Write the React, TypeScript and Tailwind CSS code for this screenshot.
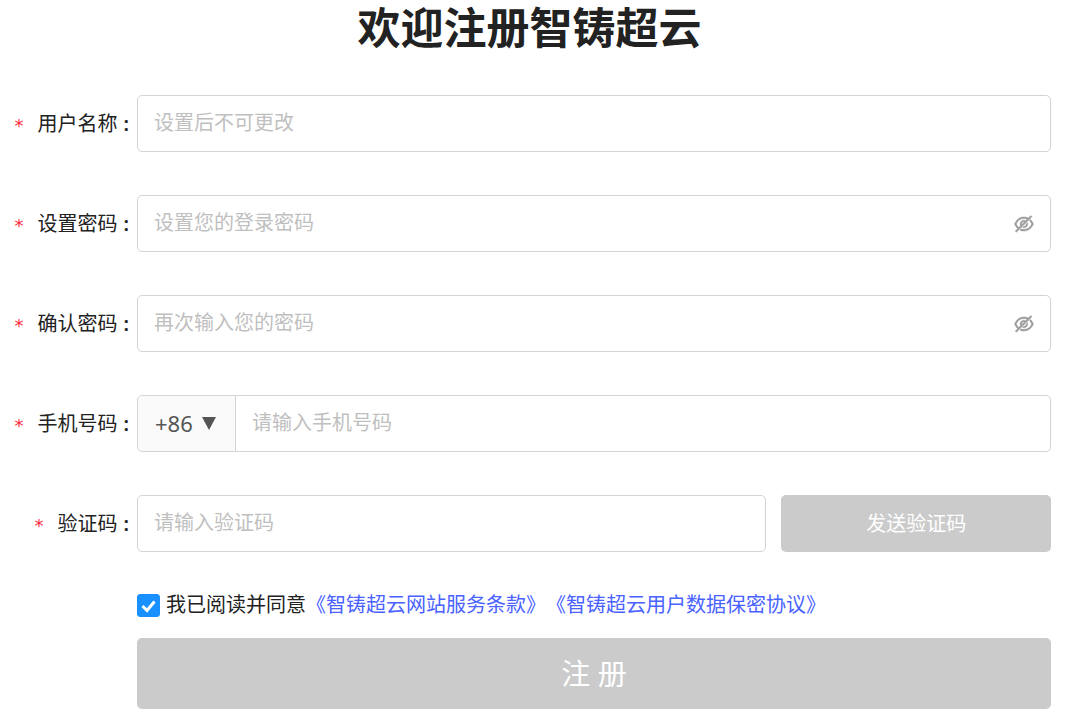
import React, { useState } from "react";
import { AiOutlineEyeInvisible } from "react-icons/ai";

const inputClass =
  "h-[57px] w-full min-w-0 rounded-[5px] border border-[#d4d4d4] bg-white px-4 pb-0.5 text-[20px] text-[#222] outline-none placeholder:text-[#bfbfbf] focus:border-[#1890ff]";

interface FormRowProps {
  id: string;
  label: string;
  children: React.ReactNode;
}

function FormRow({ id, label, children }: FormRowProps) {
  return (
    <div className="flex items-center">
      <label
        htmlFor={id}
        className="flex w-[137px] shrink-0 items-center justify-end pr-2 text-[20px] text-[#222]"
      >
        <span className="mr-3.5 pt-1 font-['DejaVu_Sans'] text-[18px] text-[#ff2d3f]">*</span>
        <span>{label}</span>
        <span className="ml-1.5 font-semibold">:</span>
      </label>
      <div className="min-w-0 flex-1">{children}</div>
    </div>
  );
}

interface PasswordInputProps {
  id: string;
  placeholder: string;
}

function PasswordInput({ id, placeholder }: PasswordInputProps) {
  const [visible, setVisible] = useState(false);

  return (
    <div className="relative">
      <input
        id={id}
        type={visible ? "text" : "password"}
        placeholder={placeholder}
        className={`${inputClass} pr-12`}
      />
      <button
        type="button"
        aria-label="显示密码"
        onClick={() => setVisible(!visible)}
        className="absolute inset-y-0 right-4 flex items-center text-[#999]"
      >
        <AiOutlineEyeInvisible size={22} strokeWidth={24} />
      </button>
    </div>
  );
}

export default function App() {
  const [agreed, setAgreed] = useState(true);

  return (
    <main className="bg-white pr-[15px] pb-2 font-['Noto_Sans','Noto_Sans_CJK_SC',sans-serif] text-[#222]">
      <h1 className="pl-2 text-center text-[43px] leading-[56px] font-bold">欢迎注册智铸超云</h1>

      <form className="mt-[39px] flex flex-col gap-[43px]" onSubmit={(e) => e.preventDefault()}>
        <FormRow id="username" label="用户名称">
          <input id="username" type="text" placeholder="设置后不可更改" className={inputClass} />
        </FormRow>

        <FormRow id="password" label="设置密码">
          <PasswordInput id="password" placeholder="设置您的登录密码" />
        </FormRow>

        <FormRow id="confirm" label="确认密码">
          <PasswordInput id="confirm" placeholder="再次输入您的密码" />
        </FormRow>

        <FormRow id="phone" label="手机号码">
          <div className="flex">
            <div className="relative shrink-0">
              <select
                aria-label="国家区号"
                className="h-[57px] w-[99px] appearance-none rounded-l-[5px] border border-[#d4d4d4] bg-[#fafafa] pl-[17px] text-[22px] text-[#555] outline-none"
              >
                <option>+86</option>
              </select>
              <svg
                viewBox="0 0 14 13"
                className="pointer-events-none absolute top-[22px] right-5 h-[13px] w-[14px] fill-[#555]"
              >
                <path d="M0 0H14L7 13Z" />
              </svg>
            </div>
            <input
              id="phone"
              type="tel"
              placeholder="请输入手机号码"
              className={`${inputClass} rounded-l-none border-l-0`}
            />
          </div>
        </FormRow>

        <FormRow id="code" label="验证码">
          <div className="grid grid-cols-[7fr_3fr] gap-[15px]">
            <input id="code" type="text" placeholder="请输入验证码" className={inputClass} />
            <button type="button" className="h-[57px] rounded-[5px] bg-[#cbcbcb] text-[20px] text-white">
              发送验证码
            </button>
          </div>
        </FormRow>

        {/* Agreement and submit */}
        <div className="-mt-1 pl-[137px]">
          <div className="flex items-center text-[20px] leading-[28px] [text-spacing-trim:space-all]">
            <span className="relative mr-1.5 h-[23px] w-[23px] shrink-0">
              <input
                id="agree"
                type="checkbox"
                checked={agreed}
                onChange={(e) => setAgreed(e.target.checked)}
                className="peer block h-full w-full appearance-none rounded-[3px] border border-[#1890ff] checked:bg-[#1890ff]"
              />
              <svg
                viewBox="0 0 23 23"
                className="pointer-events-none absolute inset-0 hidden fill-none stroke-white peer-checked:block"
              >
                <path d="M5.5 12L10 16.5L17.5 7.5" strokeWidth="3" />
              </svg>
            </span>
            <label htmlFor="agree">我已阅读并同意</label>
            <a href="#terms" className="text-[#4a62ff]">《智铸超云网站服务条款》</a>
            <a href="#privacy" className="text-[#4a62ff]">《智铸超云用户数据保密协议》</a>
          </div>

          <button
            type="submit"
            className="mt-[19px] h-[71px] w-full rounded-[5px] bg-[#cbcbcb] text-[29px] text-white"
          >
            注 册
          </button>
        </div>
      </form>
    </main>
  );
}
